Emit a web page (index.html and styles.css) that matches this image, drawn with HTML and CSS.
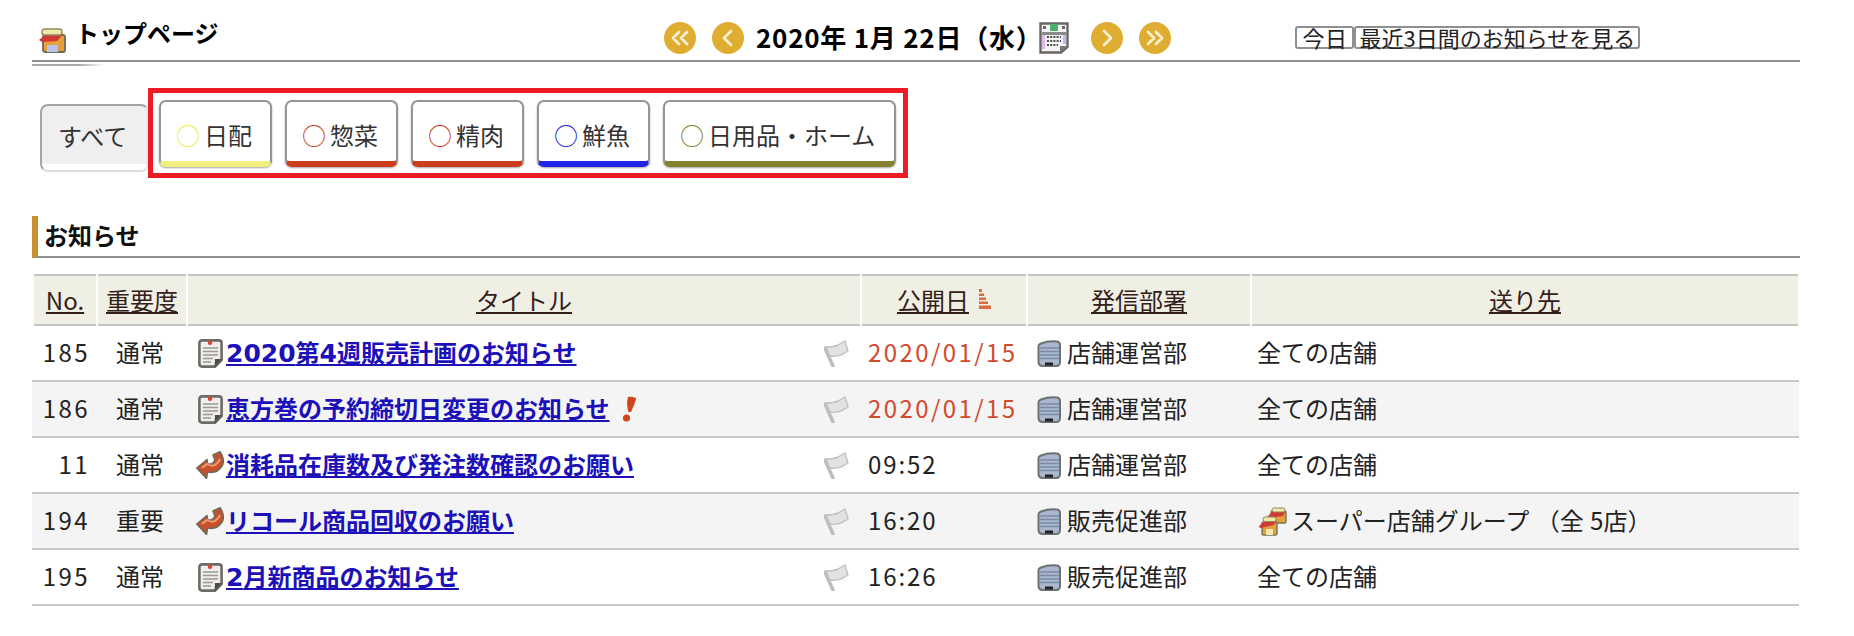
FILE: index.html
```html
<!DOCTYPE html>
<html lang="ja">
<head>
<meta charset="utf-8">
<title>トップページ</title>
<link rel="stylesheet" href="styles.css">
</head>
<body>
<svg class="defs" width="0" height="0" aria-hidden="true">
  <defs>
    <symbol id="i-shop" viewBox="0 0 28 25">
      <rect x="5" y="7" width="22" height="17" rx="2" fill="#e3a03c" stroke="#6f6a55" stroke-width="1.8"/>
      <rect x="9" y="17" width="11" height="7" fill="#b9c4ee"/>
      <path d="M1 12 L7 7 L25 6 L21 11 L19 13 L4 14Z" fill="#cf3a34"/>
      <rect x="4" y="1" width="20" height="6" rx="2.5" fill="#f2eaa8" stroke="#8d8a64" stroke-width="1.4"/>
    </symbol>
    <symbol id="i-doc" viewBox="0 0 25 29">
      <path d="M4 1.4 H21 Q23.6 1.4 23.6 4 V21 L17 27.6 H4 Q1.4 27.6 1.4 25 V4 Q1.4 1.4 4 1.4Z" fill="#efeeea" stroke="#6e6a66" stroke-width="2.6"/>
      <path d="M24 20 L17 20 L16.5 28Z" fill="#4d4d4d"/>
      <circle cx="12" cy="3.8" r="2.2" fill="#d8442c"/>
      <path d="M5 9 H20 M5 12.5 H20 M5 16 H20 M5 19.5 H15 M5 23 H13" stroke="#9a9892" stroke-width="1.7"/>
    </symbol>
    <symbol id="i-arrow" viewBox="0 0 28 28">
      <path d="M0.8 17 L11 8.5 L11.5 13 Q17 14 19 9 L17 4 L24 0.8 Q29.5 9 26 15 Q21 23 11.5 21 L10.5 27.5Z" fill="#c9502a" stroke="#6e6a5c" stroke-width="1.6" stroke-linejoin="round"/>
      <path d="M6 17 L11 13 Q19 18 24 8" fill="none" stroke="#ef9a72" stroke-width="2"/>
    </symbol>
    <symbol id="i-flag" viewBox="0 0 25 27">
      <path d="M1 8 L9 26" stroke="#bdbdbd" stroke-width="3.5" stroke-linecap="round"/>
      <path d="M2 7 Q10 7 14 5 L21 1 L24 11 L17 15 Q10 17 6 16Z" fill="#e2e2e2" stroke="#c2c2c2" stroke-width="1.4"/>
    </symbol>
    <symbol id="i-server" viewBox="0 0 24 27">
      <path d="M4 3.5 Q12 .5 20 1.5 Q23 2 23 5 V22 Q23 26 19 26 H6 Q1.5 26 1.5 22 V6 Q1.5 4.5 4 3.5Z" fill="#a9b8cf" stroke="#6e7170" stroke-width="2"/>
      <path d="M3 8 H22 M3 11.5 H22 M3 15 H22 M3 18.5 H22" stroke="#7b8ba6" stroke-width="1.3"/>
      <rect x="8" y="22.5" width="8" height="3" fill="#222"/>
    </symbol>
    <symbol id="i-group" viewBox="0 0 30 29">
      <rect x="13" y="4" width="15" height="12" rx="1.5" fill="#e3a03c" stroke="#77735a" stroke-width="1.4"/>
      <path d="M9 10 L14 5 L27 5 L25 9 L12 11Z" fill="#cf3a34"/>
      <rect x="14" y="1" width="13" height="4" rx="2" fill="#f2eaa8" stroke="#8d8a64"/>
      <rect x="4" y="15" width="15" height="13" rx="1.5" fill="#e3a03c" stroke="#77735a" stroke-width="1.4"/>
      <rect x="8" y="22" width="7" height="6" fill="#f3e8b0"/>
      <path d="M0.5 20 L5 15 L18 14 L16 18 L3 21Z" fill="#cf3a34"/>
      <rect x="5" y="10" width="13" height="4.5" rx="2" fill="#f2eaa8" stroke="#8d8a64"/>
    </symbol>
    <symbol id="i-cal" viewBox="0 0 30 32">
      <path d="M1.5 1.5 H28.5 V25 L22 30.5 H1.5Z" fill="#f4f4f4" stroke="#6a6762" stroke-width="2.4"/>
      <rect x="11" y="2" width="8" height="7" fill="#45b36b"/>
      <rect x="4" y="4" width="3" height="3" fill="#666"/>
      <rect x="23" y="4" width="3" height="3" fill="#666"/>
      <rect x="3" y="10" width="24" height="3" fill="#8a8a8a"/>
      <rect x="3" y="13" width="3" height="14" fill="#e3b6ee"/>
      <rect x="24" y="13" width="3" height="9" fill="#b7bdf0"/>
      <path d="M8 15 H22 M8 19 H22 M8 23 H19" stroke="#4f4f4f" stroke-width="2" stroke-dasharray="2 1.2"/>
      <path d="M29 24 L21 24 L21 31Z" fill="#777"/>
    </symbol>
    <symbol id="i-sort" viewBox="0 0 13 20">
      <path d="M1 0 H4 V3 H1Z M1 4.5 H6 V7 H1Z M1 8.5 H8 V11 H1Z M1 12.5 H10 V15 H1Z M1 16.5 H13 V20 H1Z" fill="#dc6a44"/>
    </symbol>
    <symbol id="i-excl" viewBox="0 0 16 26">
      <path d="M7 1 Q10 0 15 2 Q15 5 10 16 L7.5 16 Q5 8 7 1Z" fill="#d0441e"/>
      <circle cx="5.5" cy="22" r="3.6" fill="#d0441e"/>
    </symbol>
  </defs>
</svg>

<div class="page">
  <header class="topbar">
    <div class="brand">
      <svg class="ic ic-shop"><use href="#i-shop"/></svg>
      <h1 class="brand-title">トップページ</h1>
    </div>
    <nav class="datenav">
      <a class="circle" href="#"><svg viewBox="0 0 32 32"><path d="M15 10 L9 16 L15 22 M23 10 L17 16 L23 22" class="chev"/></svg></a>
      <a class="circle" href="#"><svg viewBox="0 0 32 32"><path d="M19 9 L12 16 L19 23" class="chev"/></svg></a>
      <span class="date">2020年 1月 22日（水）</span>
      <svg class="ic ic-cal"><use href="#i-cal"/></svg>
      <a class="circle c-next" href="#"><svg viewBox="0 0 32 32"><path d="M13 9 L20 16 L13 23" class="chev"/></svg></a>
      <a class="circle" href="#"><svg viewBox="0 0 32 32"><path d="M9 10 L15 16 L9 22 M17 10 L23 16 L17 22" class="chev"/></svg></a>
    </nav>
    <div class="quick">
      <button class="qbtn q-today" type="button">今日</button>
      <button class="qbtn" type="button">最近3日間のお知らせを見る</button>
    </div>
  </header>
  <div class="subrule"></div>

  <div class="tabs">
    <div class="tab-all">すべて</div>
    <div class="tabbox">
      <div class="tab t-yellow"><span class="dot">○</span>日配</div>
      <div class="tab t-red"><span class="dot">○</span>惣菜</div>
      <div class="tab t-red"><span class="dot">○</span>精肉</div>
      <div class="tab t-blue"><span class="dot">○</span>鮮魚</div>
      <div class="tab t-olive"><span class="dot">○</span>日用品・ホーム</div>
    </div>
  </div>

  <h2 class="section">お知らせ</h2>

  <table class="list">
    <colgroup>
      <col class="c1"><col class="c2"><col class="c3"><col class="c4"><col class="c5"><col class="c6">
    </colgroup>
    <thead>
      <tr>
        <th class="first"><div class="th-in"><a href="#">No.</a></div></th>
        <th><div class="th-in"><a href="#">重要度</a></div></th>
        <th><div class="th-in"><a href="#">タイトル</a></div></th>
        <th><div class="th-in"><a href="#">公開日</a><svg class="ic-sort"><use href="#i-sort"/></svg></div></th>
        <th><div class="th-in"><a href="#">発信部署</a></div></th>
        <th><div class="th-in"><a href="#">送り先</a></div></th>
      </tr>
    </thead>
    <tbody>
      <tr>
        <td class="no">185</td><td class="lv">通常</td>
        <td><div class="title"><svg class="ic ic-doc"><use href="#i-doc"/></svg><a href="#"><span class="d">2020</span>第<span class="d">4</span>週販売計画のお知らせ</a><svg class="ic ic-flag"><use href="#i-flag"/></svg></div></td>
        <td class="when late">2020/01/15</td>
        <td><div class="dept"><svg class="ic ic-server"><use href="#i-server"/></svg>店舗運営部</div></td>
        <td class="dest">全ての店舗</td>
      </tr>
      <tr class="alt">
        <td class="no">186</td><td class="lv">通常</td>
        <td><div class="title"><svg class="ic ic-doc"><use href="#i-doc"/></svg><a href="#">恵方巻の予約締切日変更のお知らせ</a><svg class="ic ic-excl"><use href="#i-excl"/></svg><svg class="ic ic-flag"><use href="#i-flag"/></svg></div></td>
        <td class="when late">2020/01/15</td>
        <td><div class="dept"><svg class="ic ic-server"><use href="#i-server"/></svg>店舗運営部</div></td>
        <td class="dest">全ての店舗</td>
      </tr>
      <tr>
        <td class="no">11</td><td class="lv">通常</td>
        <td><div class="title"><svg class="ic ic-arrow"><use href="#i-arrow"/></svg><a href="#">消耗品在庫数及び発注数確認のお願い</a><svg class="ic ic-flag"><use href="#i-flag"/></svg></div></td>
        <td class="when">09:52</td>
        <td><div class="dept"><svg class="ic ic-server"><use href="#i-server"/></svg>店舗運営部</div></td>
        <td class="dest">全ての店舗</td>
      </tr>
      <tr class="alt">
        <td class="no">194</td><td class="lv">重要</td>
        <td><div class="title"><svg class="ic ic-arrow"><use href="#i-arrow"/></svg><a href="#">リコール商品回収のお願い</a><svg class="ic ic-flag"><use href="#i-flag"/></svg></div></td>
        <td class="when">16:20</td>
        <td><div class="dept"><svg class="ic ic-server"><use href="#i-server"/></svg>販売促進部</div></td>
        <td class="dest"><div class="group"><svg class="ic ic-group"><use href="#i-group"/></svg>スーパー店舗グループ （全 5店）</div></td>
      </tr>
      <tr>
        <td class="no">195</td><td class="lv">通常</td>
        <td><div class="title"><svg class="ic ic-doc"><use href="#i-doc"/></svg><a href="#"><span class="d">2</span>月新商品のお知らせ</a><svg class="ic ic-flag"><use href="#i-flag"/></svg></div></td>
        <td class="when">16:26</td>
        <td><div class="dept"><svg class="ic ic-server"><use href="#i-server"/></svg>販売促進部</div></td>
        <td class="dest">全ての店舗</td>
      </tr>
    </tbody>
  </table>
</div>
</body>
</html>
```
FILE: styles.css
```css
* { box-sizing: border-box; }
html, body { margin: 0; padding: 0; background: #fff; }
body {
  font-family: "Noto Sans CJK JP", "Noto Sans", sans-serif;
  font-size: 24px;
  color: #222;
  height: 636px;
  overflow: hidden;
}
.defs { position: absolute; }
.page { padding: 0 54px 0 32px; }
.ic { filter: blur(.35px); flex: none; }

/* top bar */
.topbar {
  display: flex;
  align-items: center;
  height: 62px;
  border-bottom: 2px solid #8f8f8f;
  padding: 14px 0 0 6px;
}
.brand { display: flex; align-items: center; width: 626px; flex: none; }
.ic-shop { width: 28px; height: 25px; margin: 6px 9px 0 0; }
.brand-title { margin: -7px 0 0; font-size: 24px; font-weight: 700; color: #000; line-height: 1.2; }
.datenav { display: flex; align-items: center; flex: none; margin-top: 2px; }
.circle { display: block; width: 32px; height: 32px; border-radius: 50%; background: #e0ad33; margin-right: 16px; flex: none; }
.circle svg { display: block; width: 32px; height: 32px; }
.chev { fill: none; stroke: #f8eed2; stroke-width: 2.8; stroke-linecap: round; stroke-linejoin: round; }
.date { font-size: 26px; font-weight: 700; color: #000; margin: -3px -3px 0 -4px; white-space: nowrap; line-height: 1.2; letter-spacing: .75px; }
.ic-cal { width: 30px; height: 32px; margin-right: 22px; }
.quick { display: flex; margin-left: 108px; gap: 0; }
.qbtn {
  height: 23px;
  padding: 0 3px;
  border: 2px solid #8f8f8f;
  border-radius: 3px;
  background: #fff;
  font-family: inherit;
  font-size: 22px;
  line-height: 17px;
  color: #222;
  white-space: nowrap;
}
.q-today { padding: 0 5px; letter-spacing: .5px; }
.subrule {
  width: 72px;
  height: 2px;
  margin-top: 2px;
  background: linear-gradient(to right, #a8a8a8 65%, #fff);
}

/* tabs */
.tabs { display: flex; align-items: flex-start; margin: 22px 0 0 8px; }
.tab-all {
  width: 109px;
  height: 68px;
  margin-top: 16px;
  padding: 10px 0 0 16px;
  background: linear-gradient(#efefef 0 58px, #fff 58px);
  border: 2px solid #a5a5a5;
  border-bottom-color: #dcdcdc;
  border-right-color: #e6e6e6;
  border-radius: 8px;
  line-height: 40px;
  color: #333;
}
.tabbox {
  display: flex;
  gap: 13px;
  margin-left: -1px;
  padding: 7px 7px 0 6px;
  height: 90px;
  border: 5px solid #ed1c24;
}
.tab {
  height: 67px;
  padding: 12px 0 0 15px;
  background: #fff;
  border: 2px solid #959595;
  border-bottom-width: 6px;
  border-radius: 7px;
  box-shadow: 0 1px 2px rgba(0,0,0,.35);
  white-space: nowrap;
  line-height: 42px;
  color: #333;
  width: 113px;
}
.t-olive { width: 233px; }
.dot { display: inline-block; width: 28px; font-size: 24px; }
.t-yellow { border-bottom-color: #f3ef7c; } .t-yellow .dot { color: #eded3e; }
.t-red { border-bottom-color: #cc3d1c; } .t-red .dot { color: #cc3d1c; }
.t-blue { border-bottom-color: #2222e8; } .t-blue .dot { color: #2222e8; }
.t-olive { border-bottom-color: #84802c; } .t-olive .dot { color: #84802c; }

/* section */
.section {
  margin: 38px 0 0;
  height: 42px;
  padding-left: 6px;
  border-left: 6px solid #c8902e;
  border-bottom: 2px solid #8f8f8f;
  font-size: 24px;
  font-weight: 700;
  line-height: 38px;
  color: #111;
}

/* table */
.list { margin-top: 16px; width: 1767px; table-layout: fixed; border-collapse: separate; border-spacing: 0; }
.c1 { width: 65px; } .c2 { width: 90px; } .c3 { width: 674px; }
.c4 { width: 166px; } .c5 { width: 224px; } .c6 { width: 548px; }
th { padding: 0 1px; font-weight: 400; }
th.first { padding-left: 2px; }
.th-in {
  display: flex;
  align-items: center;
  justify-content: center;
  height: 52px;
  padding-bottom: 2px;
  background: #f0efe4;
  border-top: 2px solid #c4c4c4;
  border-bottom: 2px solid #c4c4c4;
}
.th-in a { color: #33201a; text-decoration: underline; }
.ic-sort { width: 13px; height: 20px; margin-left: 9px; }
td {
  height: 56px;
  padding: 0 0 4px;
  border-bottom: 2px solid #c8c8c8;
  white-space: nowrap;
  vertical-align: middle;
}
td .ic { margin-top: 4px; }
.alt td { background: #f4f4f4; }
.no { text-align: right; padding-right: 7px; letter-spacing: 2.4px; }
.lv { text-align: center; padding-right: 4px; }
.title { display: flex; align-items: center; padding: 0 12px 0 9px; }
.title a { color: #1c10b8; font-weight: 700; text-decoration: underline; }
.d { font-family: "DejaVu Sans", sans-serif; font-size: 25px; line-height: 1; }
.ic-doc { width: 25px; height: 29px; margin: 0 3px 0 2px; }
.ic-arrow { width: 28px; height: 28px; margin-right: 2px; }
.ic-flag { width: 25px; height: 27px; margin-left: auto; }
.ic-excl { width: 16px; height: 26px; margin-left: 11px; }
.when { padding-left: 7px; letter-spacing: 1.9px; }
.late { color: #d04a2e; letter-spacing: 2.4px; }
.dept { display: flex; align-items: center; padding-left: 10px; }
.ic-server { width: 24px; height: 27px; margin-right: 6px; }
.dest { padding-left: 6px; }
.group { display: flex; align-items: center; padding-left: 1px; word-spacing: 1px; }
.ic-group { width: 30px; height: 29px; margin-right: 3px; }
```
